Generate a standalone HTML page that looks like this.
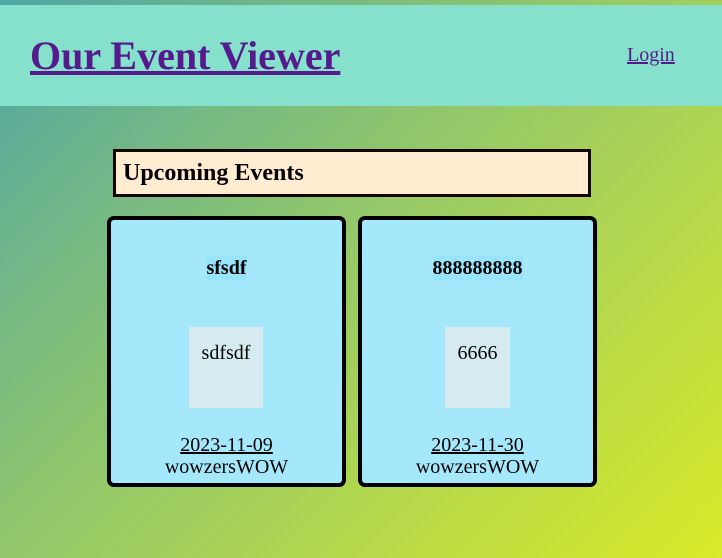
<!DOCTYPE html>
<html><head><meta charset="utf-8"><style>
*{margin:0;padding:0;box-sizing:border-box}
html,body{width:722px;height:558px;overflow:hidden}
body{background:linear-gradient(135deg,#4fa6a6 0%,#8cc46f 40%,#b5d84c 70%,#d8ea28 100%);font-family:"Liberation Serif","Times New Roman",Times,serif;position:relative}
.hdr{position:absolute;left:0;top:5px;width:722px;height:101px;background:#86e1cc}
.title{position:absolute;left:30px;top:32px;font-size:40px;font-weight:bold;color:#551a8b;text-decoration:underline;line-height:48px;white-space:nowrap}
.login{position:absolute;left:627px;top:43px;font-size:20px;color:#551a8b;text-decoration:underline;line-height:24px}
.up{position:absolute;left:113px;top:149px;width:478px;height:48px;border:3px solid #150400;background:#ffecd1;font-size:24px;font-weight:bold;padding-left:7px;line-height:43px}
.card{position:absolute;top:216px;width:239px;height:271px;border:4px solid #000;border-radius:7px;background:#a6e8fb;text-align:center}
.card h3{position:absolute;top:36px;left:0;right:0;font-size:20px;line-height:24px}
.card h3 span{background:#97e4fb;padding:1px 0}
.box{position:absolute;top:107px;width:74px;height:81px;background:#d6ebf0;font-size:20px;line-height:24px;padding-top:14px}
.date{position:absolute;top:213px;left:0;right:0;font-size:20px;line-height:24px}
.date span{text-decoration:underline}
.who{position:absolute;top:235px;left:0;right:0;font-size:20px;line-height:24px}
</style></head><body>
<div class="hdr"></div>
<div class="title">Our Event Viewer</div>
<div class="login">Login</div>
<div class="up">Upcoming Events</div>
<div class="card" style="left:107px">
<h3><span>sfsdf</span></h3>
<div class="box" style="left:78px">sdfsdf</div>
<div class="date"><span>2023-11-09</span></div>
<div class="who">wowzersWOW</div>
</div>
<div class="card" style="left:358px">
<h3><span>888888888</span></h3>
<div class="box" style="left:83px;width:65px">6666</div>
<div class="date"><span>2023-11-30</span></div>
<div class="who">wowzersWOW</div>
</div>
</body></html>
